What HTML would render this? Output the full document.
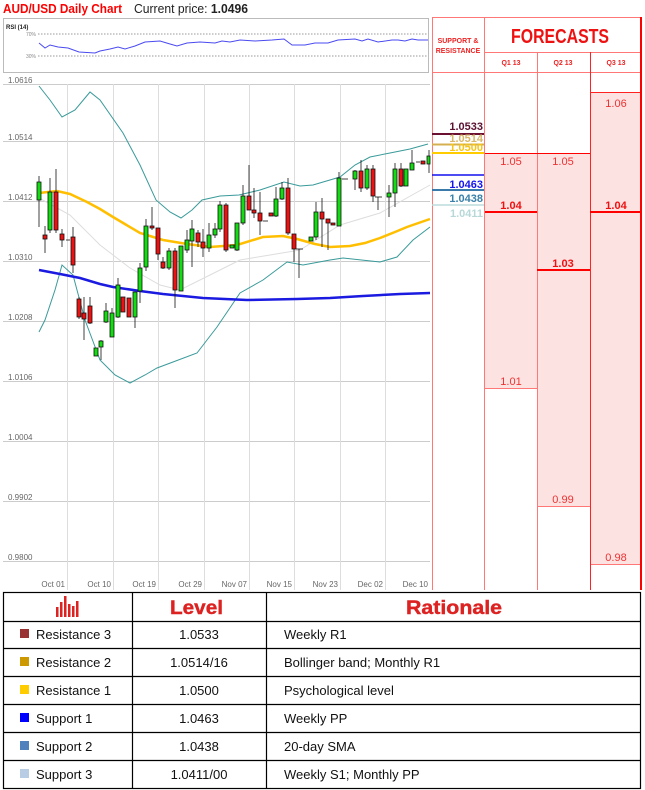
<!DOCTYPE html>
<html><head><meta charset="utf-8"><style>
html,body{margin:0;padding:0;background:#fff;}
body{width:645px;height:790px;overflow:hidden;position:relative;font-family:"Liberation Sans",sans-serif;}
</style></head><body>
<svg width="645" height="790" viewBox="0 0 645 790" xmlns="http://www.w3.org/2000/svg" style="position:absolute;left:0;top:0" font-family="Liberation Sans, sans-serif">
<!-- title -->
<text x="3" y="13" font-size="13" font-weight="bold" fill="#ff0000" textLength="119" lengthAdjust="spacingAndGlyphs">AUD/USD Daily Chart</text>
<text x="134" y="13" font-size="13" fill="#222" textLength="114" lengthAdjust="spacingAndGlyphs">Current price: <tspan font-weight="bold">1.0496</tspan></text>
<!-- RSI box -->
<rect x="3.5" y="18.5" width="425" height="54" fill="#fff" stroke="#bbb"/>
<text x="6" y="29" font-size="6" fill="#222" font-weight="bold">RSI (14)</text>
<text x="26" y="36" font-size="5" fill="#888">70%</text>
<text x="26" y="58" font-size="5" fill="#888">30%</text>
<line x1="38" y1="34" x2="428" y2="34" stroke="#777" stroke-dasharray="1.5,1.5" stroke-width="0.8"/>
<line x1="38" y1="56" x2="428" y2="56" stroke="#777" stroke-dasharray="1.5,1.5" stroke-width="0.8"/>
<polyline fill="none" stroke="#4a4af0" stroke-width="1" points="39,43 45,48 50,45 58,47 68,48 79,52 95,53 100,51 110,49 118,47 125,49 135,46 145,42 160,41 170,44 177,46 187,43 200,42 215,43 222,41 230,42 240,40 255,41 272,40 284,39 292,45 305,45 315,43 328,43 338,40 355,39 362,41 368,39 378,42 392,40 398,40 405,41 412,39 418,40 428,40"/>
<!-- chart grid -->
<g stroke="#ccc" stroke-width="1">
<line x1="3" y1="84.5" x2="430" y2="84.5"/>
<line x1="3" y1="141.5" x2="430" y2="141.5"/>
<line x1="3" y1="201.5" x2="430" y2="201.5"/>
<line x1="3" y1="261.5" x2="430" y2="261.5"/>
<line x1="3" y1="321.5" x2="430" y2="321.5"/>
<line x1="3" y1="381.5" x2="430" y2="381.5"/>
<line x1="3" y1="441.5" x2="430" y2="441.5"/>
<line x1="3" y1="501.5" x2="430" y2="501.5"/>
<line x1="3" y1="561.5" x2="430" y2="561.5"/>
</g>
<g stroke="#ddd" stroke-width="1">
<line x1="67.5" y1="84" x2="67.5" y2="590"/>
<line x1="113.5" y1="84" x2="113.5" y2="590"/>
<line x1="158.5" y1="84" x2="158.5" y2="590"/>
<line x1="204.5" y1="84" x2="204.5" y2="590"/>
<line x1="249.5" y1="84" x2="249.5" y2="590"/>
<line x1="294.5" y1="84" x2="294.5" y2="590"/>
<line x1="340.5" y1="84" x2="340.5" y2="590"/>
<line x1="385.5" y1="84" x2="385.5" y2="590"/>
</g>
<g font-size="8" fill="#666">
<text x="8" y="83">1.0616</text><text x="8" y="140">1.0514</text><text x="8" y="200">1.0412</text>
<text x="8" y="260">1.0310</text><text x="8" y="320">1.0208</text><text x="8" y="380">1.0106</text>
<text x="8" y="440">1.0004</text><text x="8" y="500">0.9902</text><text x="8" y="560">0.9800</text>
</g>
<g font-size="8" fill="#666" text-anchor="end">
<text x="65" y="587">Oct 01</text><text x="111" y="587">Oct 10</text><text x="156" y="587">Oct 19</text>
<text x="202" y="587">Oct 29</text><text x="247" y="587">Nov 07</text><text x="292" y="587">Nov 15</text>
<text x="338" y="587">Nov 23</text><text x="383" y="587">Dec 02</text><text x="428" y="587">Dec 10</text>
</g>
<!-- bands -->
<polyline fill="none" stroke="#ddd" stroke-width="1" points="39,198 70,215 100,245 130,268 160,285 180,290 210,275 240,260 270,255 300,250 340,225 380,213 430,185"/>
<polyline fill="none" stroke="#3a9a9a" stroke-width="1" points="39,86 50,100 62,117 75,110 90,92 100,100 123,133 140,165 156,200 170,212 181,218 192,210 202,200 220,196 239,195 260,190 284,182 300,186 313,185 340,177 355,165 370,157 390,153 410,149 428,144"/>
<polyline fill="none" stroke="#3a9a9a" stroke-width="1" points="39,332 45,320 55,290 62,265 73,275 85,320 100,360 115,375 130,383 145,375 157,368 173,362 197,353 217,327 240,293 263,280 287,262 303,265 330,260 343,258 380,262 397,257 413,240 430,227"/>
<polyline fill="none" stroke="#ffbf00" stroke-width="2.5" points="39,193 57,191 70,194 87,202 100,209 113,217 140,233 163,240 187,244 210,247 237,245 263,237 283,236 297,239 315,244 330,247 350,246 365,243 380,238 395,232 407,227 430,219"/>
<polyline fill="none" stroke="#1a1ae0" stroke-width="2.5" points="39,270 60,274 80,278 100,284 113,287 140,291 163,294 203,298 247,300 297,299 330,298 363,296 400,294 430,293"/>
<!-- candles -->
<g stroke="#111" stroke-width="0.8">
<line x1="39" y1="176" x2="39" y2="227"/><rect x="37" y="182" width="4" height="18" fill="#11dd11"/>
<line x1="45" y1="226" x2="45" y2="253"/><rect x="43" y="235" width="4" height="4" fill="#ee1111"/>
<line x1="50" y1="178" x2="50" y2="233"/><rect x="48" y="192" width="4" height="38" fill="#11dd11"/>
<line x1="56" y1="169" x2="56" y2="233"/><rect x="54" y="192" width="4" height="38" fill="#ee1111"/>
<line x1="62" y1="229" x2="62" y2="247"/><rect x="60" y="234" width="4" height="6" fill="#ee1111"/>
<line x1="66" y1="240" x2="70" y2="240"/>
<line x1="73" y1="227" x2="73" y2="273"/><rect x="71" y="237" width="4" height="28" fill="#ee1111"/>
<line x1="79" y1="297" x2="79" y2="319"/><rect x="77" y="299" width="4" height="18" fill="#ee1111"/>
<line x1="84" y1="297" x2="84" y2="340"/><rect x="82" y="313" width="4" height="6" fill="#ee1111"/>
<line x1="90" y1="297" x2="90" y2="324"/><rect x="88" y="306" width="4" height="17" fill="#ee1111"/>
<rect x="94" y="348" width="4" height="8" fill="#11dd11"/>
<line x1="101" y1="340" x2="101" y2="360"/><rect x="99" y="341" width="4" height="6" fill="#11dd11"/>
<line x1="106" y1="303" x2="106" y2="323"/><rect x="104" y="311" width="4" height="11" fill="#11dd11"/>
<line x1="112" y1="308" x2="112" y2="337"/><rect x="110" y="313" width="4" height="24" fill="#11dd11"/>
<line x1="118" y1="278" x2="118" y2="318"/><rect x="116" y="285" width="4" height="32" fill="#11dd11"/>
<rect x="121" y="297" width="4" height="15" fill="#ee1111"/>
<rect x="127" y="298" width="4" height="19" fill="#ee1111"/>
<line x1="135" y1="292" x2="135" y2="328"/><rect x="133" y="292" width="4" height="25" fill="#11dd11"/>
<line x1="140" y1="263" x2="140" y2="303"/><rect x="138" y="268" width="4" height="23" fill="#11dd11"/>
<line x1="146" y1="219" x2="146" y2="271"/><rect x="144" y="226" width="4" height="41" fill="#11dd11"/>
<line x1="152" y1="207" x2="152" y2="230"/><rect x="150" y="226" width="4" height="2" fill="#ee1111"/>
<line x1="158" y1="228" x2="158" y2="260"/><rect x="156" y="228" width="4" height="26" fill="#ee1111"/>
<line x1="163" y1="257" x2="163" y2="269"/><rect x="161" y="262" width="4" height="6" fill="#ee1111"/>
<line x1="169" y1="248" x2="169" y2="270"/><rect x="167" y="251" width="4" height="17" fill="#11dd11"/>
<line x1="175" y1="248" x2="175" y2="308"/><rect x="173" y="251" width="4" height="39" fill="#ee1111"/>
<rect x="179" y="246" width="4" height="45" fill="#11dd11"/>
<line x1="187" y1="230" x2="187" y2="253"/><rect x="185" y="240" width="4" height="10" fill="#11dd11"/>
<line x1="192" y1="220" x2="192" y2="267"/><rect x="190" y="229" width="4" height="12" fill="#11dd11"/>
<line x1="198" y1="230" x2="198" y2="247"/><rect x="196" y="233" width="4" height="9" fill="#ee1111"/>
<line x1="203" y1="229" x2="203" y2="257"/><rect x="201" y="242" width="4" height="6" fill="#ee1111"/>
<line x1="209" y1="223" x2="209" y2="252"/><rect x="207" y="235" width="4" height="13" fill="#11dd11"/>
<line x1="215" y1="223" x2="215" y2="238"/><rect x="213" y="229" width="4" height="6" fill="#11dd11"/>
<line x1="220" y1="201" x2="220" y2="232"/><rect x="218" y="205" width="4" height="24" fill="#11dd11"/>
<line x1="226" y1="203" x2="226" y2="252"/><rect x="224" y="205" width="4" height="45" fill="#ee1111"/>
<rect x="230" y="245" width="4" height="3" fill="#11dd11"/>
<line x1="237" y1="223" x2="237" y2="251"/><rect x="235" y="223" width="4" height="27" fill="#11dd11"/>
<line x1="243" y1="185" x2="243" y2="225"/><rect x="241" y="196" width="4" height="27" fill="#11dd11"/>
<line x1="249" y1="165" x2="249" y2="210"/><rect x="247" y="196" width="4" height="14" fill="#ee1111"/>
<line x1="254" y1="188" x2="254" y2="218"/><rect x="252" y="210" width="4" height="3" fill="#ee1111"/>
<line x1="260" y1="192" x2="260" y2="235"/><rect x="258" y="213" width="4" height="8" fill="#ee1111"/>
<line x1="263" y1="221" x2="268" y2="221"/>
<rect x="269" y="213" width="4" height="3" fill="#ee1111"/>
<line x1="276" y1="187" x2="276" y2="217"/><rect x="274" y="199" width="4" height="17" fill="#11dd11"/>
<line x1="282" y1="182" x2="282" y2="200"/><rect x="280" y="188" width="4" height="11" fill="#11dd11"/>
<line x1="288" y1="178" x2="288" y2="235"/><rect x="286" y="188" width="4" height="45" fill="#ee1111"/>
<line x1="294" y1="234" x2="294" y2="262"/><rect x="292" y="234" width="4" height="15" fill="#ee1111"/>
<line x1="296" y1="249" x2="303" y2="249"/><line x1="299" y1="249" x2="299" y2="278"/>
<rect x="309" y="237" width="4" height="4" fill="#11dd11"/>
<line x1="316" y1="202" x2="316" y2="240"/><rect x="314" y="212" width="4" height="25" fill="#11dd11"/>
<line x1="322" y1="198" x2="322" y2="247"/><rect x="320" y="212" width="4" height="7" fill="#ee1111"/>
<line x1="328" y1="219" x2="328" y2="250"/><rect x="326" y="219" width="4" height="4" fill="#ee1111"/>
<rect x="331" y="223" width="4" height="2" fill="#ee1111"/>
<line x1="339" y1="172" x2="339" y2="226"/><rect x="337" y="178" width="4" height="48" fill="#11dd11"/>
<line x1="342" y1="179" x2="348" y2="179"/>
<line x1="355" y1="170" x2="355" y2="190"/><rect x="353" y="171" width="4" height="8" fill="#11dd11"/>
<line x1="361" y1="160" x2="361" y2="192"/><rect x="359" y="171" width="4" height="17" fill="#ee1111"/>
<line x1="367" y1="165" x2="367" y2="190"/><rect x="365" y="169" width="4" height="19" fill="#11dd11"/>
<line x1="373" y1="165" x2="373" y2="202"/><rect x="371" y="169" width="4" height="27" fill="#ee1111"/>
<line x1="375" y1="197" x2="382" y2="197"/><line x1="378" y1="197" x2="378" y2="210"/>
<line x1="389" y1="185" x2="389" y2="217"/><rect x="387" y="193" width="4" height="4" fill="#11dd11"/>
<line x1="395" y1="163" x2="395" y2="207"/><rect x="393" y="169" width="4" height="24" fill="#11dd11"/>
<line x1="401" y1="163" x2="401" y2="187"/><rect x="399" y="169" width="4" height="17" fill="#ee1111"/>
<rect x="404" y="169" width="4" height="17" fill="#11dd11"/>
<line x1="412" y1="150" x2="412" y2="170"/><rect x="410" y="163" width="4" height="7" fill="#11dd11"/>
<line x1="416" y1="162" x2="420" y2="162"/>
<rect x="421" y="161" width="4" height="3" fill="#ee1111"/>
<line x1="429" y1="150" x2="429" y2="173"/><rect x="427" y="156" width="3" height="8" fill="#11dd11"/>
</g>
<!-- right panel -->
<rect x="485" y="153" width="52" height="235" fill="#fde2e2"/>
<rect x="537" y="153" width="53" height="353" fill="#fde2e2"/>
<rect x="590" y="93" width="52" height="471" fill="#fde2e2"/>
<g stroke="#f77" stroke-width="1">
<line x1="432.5" y1="17" x2="432.5" y2="590"/>
<line x1="484.5" y1="17" x2="484.5" y2="590"/>
<line x1="537.5" y1="52" x2="537.5" y2="590"/>
<line x1="432" y1="17.5" x2="642" y2="17.5"/>
<line x1="485" y1="52.5" x2="642" y2="52.5"/>
<line x1="432" y1="72.5" x2="642" y2="72.5"/>
<line x1="485" y1="388.5" x2="537" y2="388.5"/>
<line x1="537" y1="506.5" x2="590" y2="506.5"/>
<line x1="590" y1="564.5" x2="642" y2="564.5"/>
</g>
<line x1="590.5" y1="52" x2="590.5" y2="590" stroke="#f22" stroke-width="1"/>
<line x1="590" y1="92.5" x2="642" y2="92.5" stroke="#f22" stroke-width="1"/>
<line x1="641" y1="17" x2="641" y2="590" stroke="#f00" stroke-width="2"/>
<line x1="485" y1="153.5" x2="590" y2="153.5" stroke="#f00" stroke-width="1"/>
<line x1="485" y1="212" x2="537" y2="212" stroke="#f00" stroke-width="2"/>
<line x1="590" y1="212" x2="642" y2="212" stroke="#f00" stroke-width="2"/>
<line x1="537" y1="270" x2="590" y2="270" stroke="#f00" stroke-width="2"/>
<text x="458" y="43" font-size="7" font-weight="bold" fill="#ee2222" text-anchor="middle">SUPPORT &amp;</text>
<text x="458" y="53" font-size="7" font-weight="bold" fill="#ee2222" text-anchor="middle">RESISTANCE</text>
<text x="511" y="43" font-size="20" font-weight="bold" fill="#ee1111" textLength="98" lengthAdjust="spacingAndGlyphs">FORECASTS</text>
<g font-size="7" fill="#ee2222" text-anchor="middle" font-weight="bold">
<text x="511" y="65">Q1 13</text><text x="563" y="65">Q2 13</text><text x="616" y="65">Q3 13</text>
</g>
<g font-size="11" fill="#ee3333" text-anchor="middle">
<text x="616" y="107">1.06</text>
<text x="511" y="165">1.05</text><text x="563" y="165">1.05</text>
<text x="511" y="385">1.01</text><text x="563" y="503">0.99</text><text x="616" y="561">0.98</text>
</g>
<g font-size="11" fill="#ee1111" text-anchor="middle" font-weight="bold">
<text x="511" y="209">1.04</text><text x="616" y="209">1.04</text><text x="563" y="267">1.03</text>
</g>
<!-- S&R lines -->
<line x1="432" y1="134" x2="484" y2="134" stroke="#6b1030" stroke-width="2"/>
<line x1="432" y1="144.5" x2="484" y2="144.5" stroke="#d4b050" stroke-width="2"/>
<line x1="432" y1="153" x2="484" y2="153" stroke="#ffcc00" stroke-width="2"/>
<line x1="432" y1="175" x2="484" y2="175" stroke="#1010ee" stroke-width="1.5"/>
<line x1="432" y1="190" x2="484" y2="190" stroke="#3a7aaa" stroke-width="2"/>
<line x1="432" y1="205" x2="484" y2="205" stroke="#bcdcdc" stroke-width="1.5"/>
<g font-size="11" font-weight="bold" text-anchor="end">
<text x="483" y="130" fill="#5a1030">1.0533</text>
<text x="483" y="142" fill="#d8b868">1.0514</text>
<text x="483" y="151" fill="#f5c518">1.0500</text>
<text x="483" y="188" fill="#1515ee">1.0463</text>
<text x="483" y="202" fill="#3a80a8">1.0438</text>
<text x="483" y="217" fill="#b8d8d8">1.0411</text>
</g>
<!-- table -->
<g stroke="#000" stroke-width="1.2" fill="none">
<rect x="3.5" y="592.5" width="637" height="196"/>
<line x1="132.5" y1="592" x2="132.5" y2="789"/>
<line x1="266.5" y1="592" x2="266.5" y2="789"/>
<line x1="3" y1="621.5" x2="641" y2="621.5"/>
<line x1="3" y1="648.5" x2="641" y2="648.5"/>
<line x1="3" y1="676.5" x2="641" y2="676.5"/>
<line x1="3" y1="704.5" x2="641" y2="704.5"/>
<line x1="3" y1="732.5" x2="641" y2="732.5"/>
<line x1="3" y1="760.5" x2="641" y2="760.5"/>
</g>
<g fill="#dd2222">
<rect x="56" y="607" width="2.5" height="10"/><rect x="60" y="602" width="2.5" height="15"/>
<rect x="64" y="596" width="2.5" height="21"/><rect x="68" y="604" width="2.5" height="13"/>
<rect x="72" y="606" width="2.5" height="11"/><rect x="76" y="601" width="2.5" height="16"/>
</g>
<text x="170" y="614" font-size="19" font-weight="bold" fill="#dd2222" textLength="53" lengthAdjust="spacingAndGlyphs" stroke="#dd2222" stroke-width="0.4">Level</text>
<text x="406" y="614" font-size="19" font-weight="bold" fill="#dd2222" textLength="96" lengthAdjust="spacingAndGlyphs" stroke="#dd2222" stroke-width="0.4">Rationale</text>
<rect x="20" y="629" width="9" height="9" fill="#993333"/>
<rect x="20" y="657" width="9" height="9" fill="#cc9900"/>
<rect x="20" y="685" width="9" height="9" fill="#ffcc00"/>
<rect x="20" y="713" width="9" height="9" fill="#0000ff"/>
<rect x="20" y="741" width="9" height="9" fill="#4f81bd"/>
<rect x="20" y="769" width="9" height="9" fill="#b8cce4"/>
<g font-size="13" fill="#111">
<text x="36" y="639">Resistance 3</text><text x="36" y="667">Resistance 2</text><text x="36" y="695">Resistance 1</text>
<text x="36" y="723">Support 1</text><text x="36" y="751">Support 2</text><text x="36" y="779">Support 3</text>
<text x="284" y="639">Weekly R1</text><text x="284" y="667">Bollinger band; Monthly R1</text><text x="284" y="695">Psychological level</text>
<text x="284" y="723">Weekly PP</text><text x="284" y="751">20-day SMA</text><text x="284" y="779">Weekly S1; Monthly PP</text>
</g>
<g font-size="13" fill="#111" text-anchor="middle">
<text x="199" y="639">1.0533</text><text x="199" y="667">1.0514/16</text><text x="199" y="695">1.0500</text>
<text x="199" y="723">1.0463</text><text x="199" y="751">1.0438</text><text x="199" y="779">1.0411/00</text>
</g>
</svg>
</body></html>
